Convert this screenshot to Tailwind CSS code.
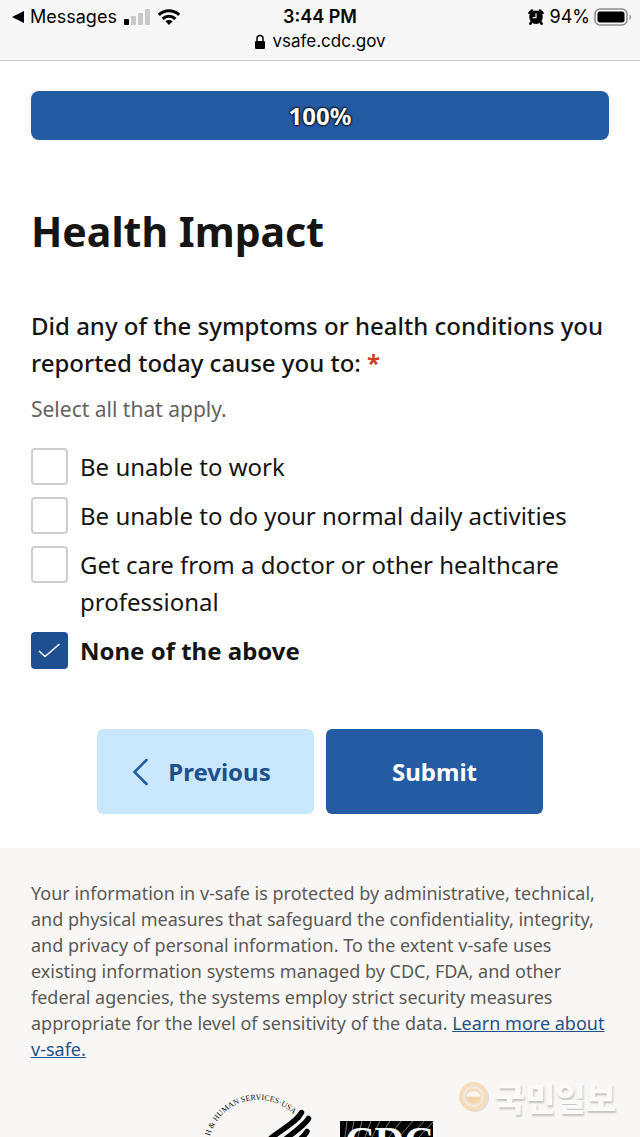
<!DOCTYPE html>
<html lang="en">
<head>
    <meta charset="UTF-8">
    <meta name="viewport" content="width=device-width, initial-scale=1.0">
    <title>v-safe - Health Impact</title>
    <script src="https://cdn.jsdelivr.net/npm/@tailwindcss/browser@4"></script>
</head>
<body class="bg-white text-[#161513] font-['Noto_Sans',sans-serif]">
    <!-- Status bar and address -->
    <header class="border-b border-[#c8c8ca] bg-[#f7f7f8] pt-1 pb-1.5 font-['Inter',sans-serif] text-lg leading-[25px] text-black">
        <div class="grid grid-cols-[1fr_auto_1fr] items-center px-2">
            <a href="#" class="flex items-center gap-1.5 pl-1">
                <svg class="h-3 w-3" viewBox="0 0 12 12"><path d="M0 6 12 0v12z"/></svg>
                <span>Messages</span>
                <svg class="h-4 w-7" viewBox="0 0 28 16">
                    <rect x="1" y="10" width="5" height="6" rx="1"/>
                    <g fill="#c9c9cb">
                        <rect x="8" y="7" width="5" height="9" rx="1"/>
                        <rect x="15" y="4" width="5" height="12" rx="1"/>
                        <rect x="22" y="0" width="5" height="16" rx="1"/>
                    </g>
                </svg>
                <svg class="h-4 w-6" viewBox="0 0 24 17">
                    <g fill="none" stroke="#000" stroke-width="3.2">
                        <path d="M1.2 6.2C7.2.3 16.8.3 22.8 6.2"/>
                        <path d="M5.2 10.4c3.9-3.7 9.7-3.7 13.6 0"/>
                    </g>
                    <path d="m12 17-3.8-3.9c2.2-1.9 5.4-1.9 7.6 0z"/>
                </svg>
            </a>
            <span class="font-semibold">3:44 PM</span>
            <div class="flex items-center justify-end gap-1">
                <svg class="mr-0.5 h-4 w-4" viewBox="0 0 16 16">
                    <path d="M1.5 4 4 1.5M14.5 4 12 1.5M3.5 13l-1.2 1.7M12.5 13l1.2 1.7" stroke="#000" stroke-width="2.5" stroke-linecap="round"/>
                    <circle cx="8" cy="8.3" r="6.7"/>
                    <path d="M8 4.5v4.2H4.8" fill="none" stroke="#fff" stroke-width="1.2"/>
                </svg>
                <span>94%</span>
                <svg class="h-[18px] w-[38px]" viewBox="0 0 38 18">
                    <rect x="1" y="1" width="32" height="16" rx="5" fill="none" stroke="#8d8d8f" stroke-width="1.5"/>
                    <rect x="3.5" y="3.5" width="27" height="11" rx="2.5"/>
                    <path d="M35.5 6.2c2 .8 2 4.8 0 5.6z" fill="#8d8d8f"/>
                </svg>
            </div>
        </div>
        <div class="flex items-center justify-center gap-1.5 text-[17px]">
            <svg class="h-4 w-3" viewBox="0 0 12 16">
                <rect x="1" y="7" width="10" height="8" rx="1.2"/>
                <path d="M3 7.5v-3a3 3 0 0 1 6 0v3" fill="none" stroke="#000" stroke-width="1.5"/>
            </svg>
            <span>vsafe.cdc.gov</span>
        </div>
    </header>

    <!-- Survey -->
    <main class="px-[31px] pt-[30px] pb-[34px]">
        <div role="progressbar" aria-valuenow="100" aria-label="Survey progress" class="flex h-[49px] items-center justify-center rounded-lg bg-[#255ba3] text-2xl font-bold text-white text-shadow-[0_0_3px_#000,0_0_2px_#000,0_0_2px_#000]">100%</div>

        <h1 class="mt-[63px] text-[41px] leading-[56px] font-bold">Health Impact</h1>

        <form>
            <fieldset>
                <legend class="pt-12 text-2xl leading-[37px] font-medium">Did any of the symptoms or health conditions you reported today cause you to: <span class="font-bold text-[#d63b25]">*</span></legend>
                <p class="pt-2.5 text-[21px] leading-9 text-[#65625f]">Select all that apply.</p>

                <div class="mt-[21px] flex flex-col gap-3 text-2xl leading-[37px]">
                    <label class="flex items-start gap-3">
                        <input type="checkbox" class="size-[37px] shrink-0 appearance-none rounded-sm border-2 border-[#cfcecd] bg-white">
                        <span>Be unable to work</span>
                    </label>
                    <label class="flex items-start gap-3">
                        <input type="checkbox" class="size-[37px] shrink-0 appearance-none rounded-sm border-2 border-[#cfcecd] bg-white">
                        <span>Be unable to do your normal daily activities</span>
                    </label>
                    <label class="flex items-start gap-3">
                        <input type="checkbox" class="size-[37px] shrink-0 appearance-none rounded-sm border-2 border-[#cfcecd] bg-white">
                        <span>Get care from a doctor or other healthcare professional</span>
                    </label>
                    <label class="flex items-start gap-3">
                        <span class="grid shrink-0">
                            <input type="checkbox" checked class="peer col-start-1 row-start-1 size-[37px] appearance-none rounded-sm border-2 border-[#cfcecd] bg-white checked:border-[#1d4f91] checked:bg-[#1d4f91]">
                            <svg class="pointer-events-none invisible col-start-1 row-start-1 size-[37px] peer-checked:visible" viewBox="0 0 37 37"><path d="m8 19 6 5.5L28.5 12" fill="none" stroke="#fff" stroke-width="1.5"/></svg>
                        </span>
                        <span class="font-bold">None of the above</span>
                    </label>
                </div>
            </fieldset>

            <div class="mt-15 flex justify-center gap-3 text-2xl font-bold">
                <button type="button" class="flex h-[85px] w-[217px] items-center justify-center gap-5 rounded-md bg-[#c9e7fd] pr-2 text-[#214f8c]">
                    <svg class="h-7 w-4" viewBox="0 0 16 28"><path d="M14.5 2 2.5 14l12 12" fill="none" stroke="#255ba3" stroke-width="2.5" stroke-linecap="round"/></svg>
                    Previous
                </button>
                <button type="submit" class="h-[85px] w-[217px] rounded-md bg-[#255ba3] text-white">Submit</button>
            </div>
        </form>
    </main>

    <!-- Footer -->
    <footer class="relative bg-[#f8f7f5] px-[31px] pt-8">
        <p class="text-lg leading-[26px] text-[#5b5956]">Your information in v-safe is protected by administrative, technical, and physical measures that safeguard the confidentiality, integrity, and privacy of personal information. To the extent v-safe uses existing information systems managed by CDC, FDA, and other federal agencies, the systems employ strict security measures appropriate for the level of sensitivity of the data. <a href="#" class="text-[#255288] underline">Learn more about v-safe.</a></p>

        <svg class="mx-auto mt-5 h-[55px] w-[240px]" viewBox="200 1082 240 55">
            <!-- HHS seal -->
            <path id="ring" d="M218.2 1180a50 50 0 1 1 79.6 0" fill="none"/>
            <g fill="none" stroke="#000" stroke-width="5.5" stroke-linecap="round">
                <path d="M270 1139c12-10 27-17 31.5-26.5"/>
                <path d="M282 1142c13-11 22-16 26.5-23.5"/>
                <path d="M293 1146c6-6 11-9 14-14.5"/>
            </g>
            <text font-family="Liberation Serif, serif" font-size="8" fill="#111"><textPath href="#ring" startOffset="46">H &amp; HUMAN SERVICES·USA</textPath></text>
            <!-- CDC logo -->
            <rect x="340" y="1121" width="93" height="55"/>
            <path d="m347 1121-2 16M354 1121l-3 16M362 1121l-4 16M371 1121l-6 16M380 1121l-8 16M390 1121l-10 16M401 1121l-12 16M413 1121l-14 16M424 1121l-14 16M433 1122l-14 15" stroke="#aaa" stroke-width=".7"/>
            <text x="345" y="1154" font-family="Liberation Serif, serif" font-size="41" font-weight="700" fill="#fff">CDC</text>
        </svg>

        <div class="absolute right-6 bottom-6 flex items-center gap-1">
            <svg class="size-8" viewBox="0 0 32 32">
                <circle cx="16" cy="17" r="14" fill="#ddd"/>
                <circle cx="14.5" cy="15.5" r="14.5" fill="#f7dcbb"/>
                <circle cx="14.5" cy="15.5" r="9.5" fill="none" stroke="#eeeae5" stroke-width="2"/>
                <path d="M7.5 16h14a7 6 0 0 1-14 0z" fill="#f4d3aa"/>
                <path d="M8 15.5a6.5 5 0 0 1 13 0z" fill="#f8f7f5"/>
            </svg>
            <span class="font-['Noto_Sans_CJK_KR',sans-serif] text-[33px] leading-8 font-black text-[#fbfaf9] text-shadow-[1px_2px_2px_#c4c3c2]">국민일보</span>
        </div>
    </footer>
</body>
</html>
